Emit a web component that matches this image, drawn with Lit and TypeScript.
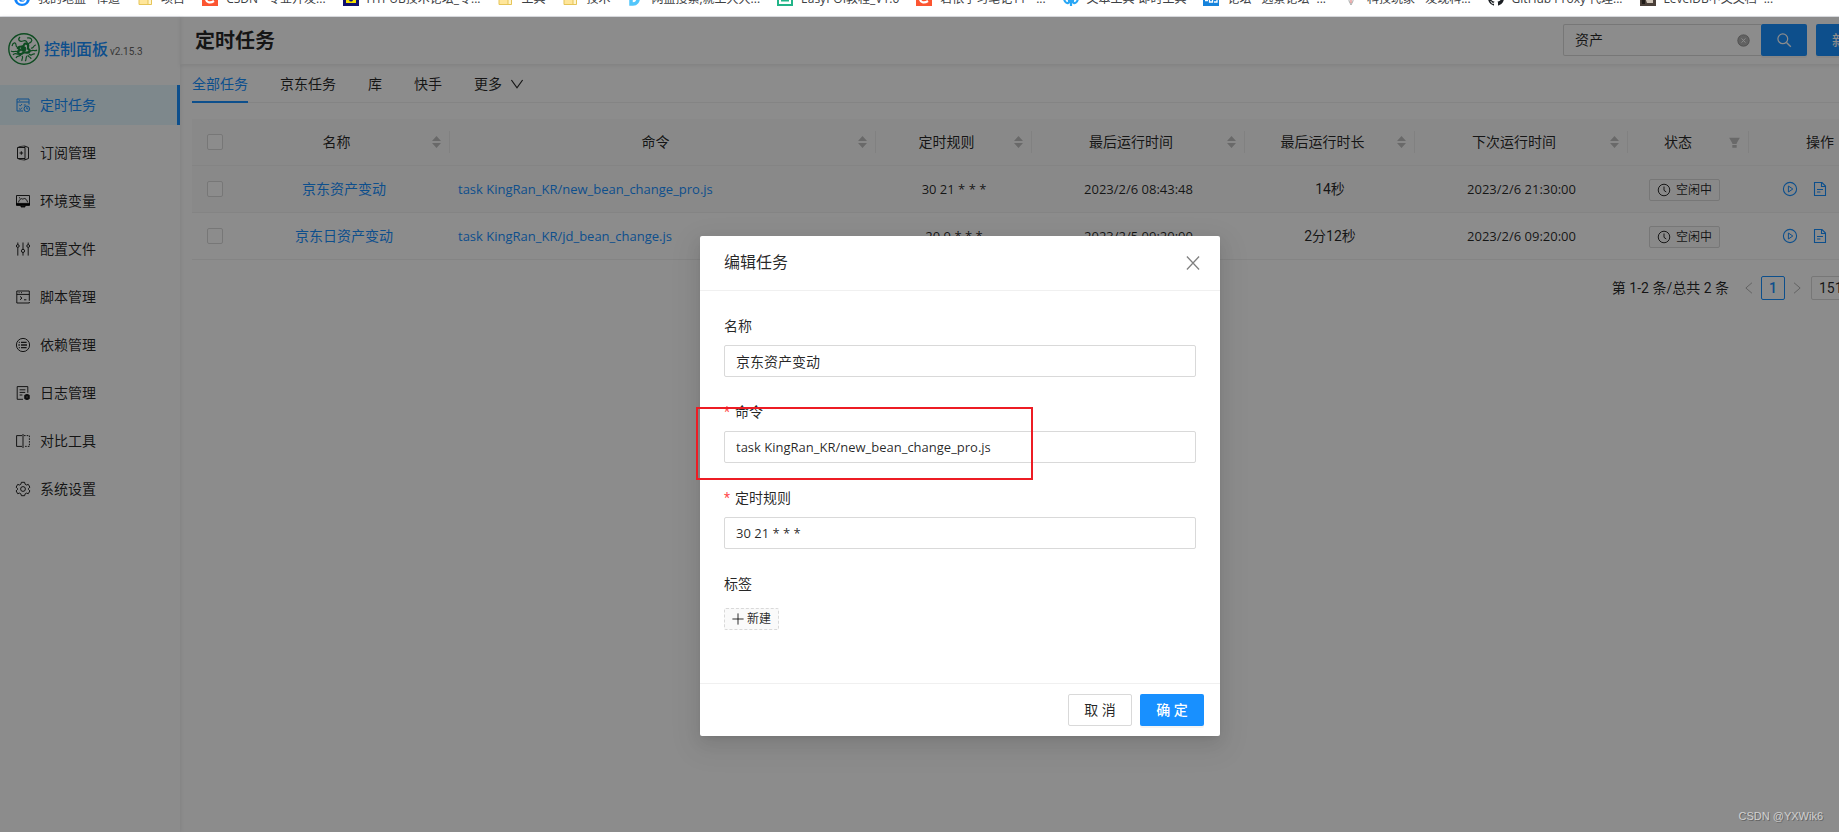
import { LitElement, html, svg, css, nothing, TemplateResult } from "lit";
import { customElement, property, state } from "lit/decorators.js";
import { classMap } from "lit/directives/class-map.js";

type Shape = TemplateResult;

/* Line icons on a 16 x 16 grid, painted in the current text colour. */
const SHAPES: Record<string, Shape> = {
  schedule: svg`<path d="M2 14V2h12v5.5M2 5h12M2 14h6"/><path d="M4.3 3.5h.8M4.2 8l1.1 1 1.7-2M4.2 11.6l1.1 1L7 10.6M8.8 8h2"/><circle cx="11.8" cy="11.8" r="2.8"/><path d="M11.8 10.2v1.7h1.4"/>`,
  book: svg`<path d="M2.500 2.5h7.500v11H2.500zM10 1.2l3.500 1.3v11L10 14.8M4.500 8h3.600M6.3 6.200v3.600"/><path d="M3.500 1.800 9.8.9v1.6M3.500 14.2l6.300.9v-1.6" stroke-width=".8"/>`,
  monitor: svg`<path d="M1.5 2.5h13v9h-13z"/><path d="M3.4 9.4c1.4-3.8 3-4.4 4.5-3.1 1.5-1.6 3.5-.8 4.8 3.1M4 4.8h1"/><path fill="currentColor" d="M1.5 10.4h13v2H10v1.6H6v-1.6H1.500z"/>`,
  sliders: svg`<path d="M2.8 1.5v2M2.8 6.6v8M8 1.5v6.7M8 11.6v3M13.2 1.5v2M13.2 6.6v8"/><circle cx="2.8" cy="5" r="1.4"/><circle cx="8" cy="9.9" r="1.6"/><circle cx="13.2" cy="5" r="1.4"/>`,
  code: svg`<path d="M1.8 2h12.5v9.8M1.8 2v12h12.5v-1M1.8 5.4h12.5M3.6 3.7h1M6 3.7h1M5 7.4l2 1.7-2 1.7M9 10.8h2.4"/>`,
  list: svg`<circle cx="8" cy="8" r="6.6"/><path stroke-width="1.4" d="M6 5.4h5.600M6 8h6M6 10.6h5.600M3.8 5.4h1M3.4 8h1.4M3.8 10.6h1"/>`,
  log: svg`<path d="M8 14.3H2.2V1.6h10.6v6.2M4.6 4.8h5.8M4.6 7.4h5.6M4.6 10h2.8"/><circle cx="12" cy="12" r="2" stroke-width="1.800"/><path d="M12 9v6M9.4 10.500l5.200 3M14.600 10.500l-5.200 3" stroke-width=".7"/>`,
  compare: svg`<path d="M7 2.6H1.6v10.8H7M8 1v14"/><path stroke-dasharray="1.6 1.1" d="M9 2.6h5.4v10.8H9"/>`,
  gear: svg`<path d="M6.4 1.3h3.2l.5 1.9 1.3.8 1.9-.6 1.6 2.8-1.4 1.3v1l1.4 1.4-1.6 2.8-1.9-.6-1.3.8-.5 1.8H6.4l-.5-1.8-1.3-.8-1.9.6-1.6-2.8 1.4-1.4v-1L1.1 6.2l1.6-2.8 1.9.6 1.3-.8z"/><circle cx="8" cy="8" r="2.4"/>`,
  down: svg`<path d="M2.4 4 8 11.8 13.6 4" stroke-width="1.2"/>`,
  left: svg`<path d="M11.4 2 4.4 8l7 6"/>`,
  right: svg`<path d="m4.6 2 7 6-7 6"/>`,
  close: svg`<path d="M2.6 2.200 13.4 13.800M13.4 2.200 2.6 13.800" stroke-width="1.1"/>`,
  plus: svg`<path d="M8 1.6v12.8M1.6 8h12.8" stroke-width="1.1"/>`,
  search: svg`<circle cx="6.8" cy="6.8" r="4.9" stroke-width="1.2"/><path d="m10.5 10.5 4.3 4.3" stroke-width="1.4"/>`,
  clear: svg`<circle cx="8" cy="8" r="7.2" fill="currentColor"/><path d="m5.6 5.4 4.8 5.2M10.4 5.4l-4.8 5.2" stroke="#fff" stroke-width="1.2"/>`,
  clock: svg`<circle cx="8" cy="8" r="6.6" stroke-width="1.1"/><path d="M8 4v4.4l2.6 1.9" stroke-width="1.1"/>`,
  play: svg`<circle cx="8" cy="8" r="6.6" stroke-width="1.1"/><path d="M6.4 5v6l4.4-3z"/>`,
  doc: svg`<path d="M2.500 1.500h7.500l3.500 3.500v9.500h-11zM9.500 1.500V5.500h4M5 8.500h6M5 11h3.4" stroke-width="1.1"/>`,
  more: svg`<path d="M3 8h.1M8 8h.1M13 8h.1" stroke-width="2" stroke-linecap="round"/>`,
  filter: svg`<path fill="currentColor" stroke="none" d="M1.4 2h13.2l-3.9 6.8v.9H5.3v-.9zM5.3 11h5.4v3.4H5.3z"/>`,
};

const icon = (name: string, size = 16) => html`<svg
  width=${size} height=${size} viewBox="0 0 16 16" fill="none"
  stroke="currentColor" stroke-width="1" aria-hidden="true">${SHAPES[name]}</svg>`;

/* Favicons of the bookmark bar, on the same grid. */
const FAVICONS: Record<string, Shape> = {
  zen: svg`<circle cx="8" cy="8" r="8" fill="#1183fb"/><path d="M4 9c0 5 8 5 8 0 0-4-5-3-5-1s3 2 3 1" fill="none" stroke="#fff" stroke-width="1.8"/>`,
  folder: svg`<path d="M0 1h12v13.5H0z" fill="#ffe69a" stroke="#e6c558"/><path d="M9 9v5.500h3.500V9z" fill="#fff4cc" stroke="#e6c558"/>`,
  csdn: svg`<path d="M0 0h16v16H0z" fill="#fc5531"/><path d="M12 5C7 2 4 5 4 8.500c0 4 4 5 8 2.500" fill="none" stroke="#fff" stroke-width="2.200"/>`,
  forum: svg`<path d="M0 0h16v16H0z" fill="#10106e"/><path d="M3 3h10v10H3z" fill="#f5e100"/><circle cx="8" cy="9.500" r="2" fill="#10106e"/>`,
  disk: svg`<path d="M4 2h2c7 0 7 12 0 12H4z" fill="none" stroke="#53c6fb" stroke-width="3.500"/>`,
  poi: svg`<path d="M1 1h14v14H1z" fill="#fff" stroke="#22b488" stroke-width="2"/><path d="M4 6h8M4 10.500h8" stroke="#22b488" stroke-width="2"/>`,
  text: svg`<path d="M1 7c0 7 5 7 5 5V5M15 7c0 7-5 7-5 5V5M8 2v14" fill="none" stroke="#2aa7f5" stroke-width="2.200"/>`,
  itbbs: svg`<path d="M0 0h16v16H0z" fill="#1683dc"/><path d="M2 10.500h3M6.500 8v4h3V8zM11 12h3V9h-3" fill="none" stroke="#fff" stroke-width="1.300"/>`,
  pen: svg`<path d="M6 2v9l2 4 2-4V2z" fill="#fff" stroke="#aaa"/><path d="M8 8v5" stroke="#d66"/>`,
  github: svg`<path fill="#1b1f23" d="M8 0a8 8 0 0 0-2.530 15.590c.4.070.55-.17.55-.38v-1.490c-2.230.48-2.690-.94-2.690-.94-.36-.92-.89-1.170-.89-1.170-.73-.5.050-.49.050-.49.800.060 1.230.83 1.230.83.71 1.220 1.870.87 2.330.66.070-.52.280-.87.500-1.070-1.770-.2-3.640-.89-3.640-3.950 0-.87.310-1.590.82-2.150-.08-.2-.36-1.020.08-2.120 0 0 .67-.22 2.200.82a7.600 7.600 0 0 1 4 0c1.530-1.040 2.200-.82 2.200-.82.44 1.100.16 1.920.08 2.120.51.56.82 1.270.82 2.150 0 3.070-1.870 3.750-3.650 3.950.29.25.54.73.54 1.480v2.190c0 .21.150.46.550.38A8 8 0 0 0 8 0z"/>`,
  level: svg`<path d="M0 0h16v16H0z" fill="#4a4039"/><path d="M4 5h9v8H7z" fill="#cfc4b8"/><path d="M1 2h4v12H2z" fill="#1f1a17"/>`,
};

const BOOKMARKS = [
  ["zen", "我的地盘 - 禅道"],
  ["folder", "项目"],
  ["csdn", "CSDN - 专业开发..."],
  ["forum", "HTPUB技术论坛_专..."],
  ["folder", "工具"],
  ["folder", "技术"],
  ["disk", "网盘搜索,就上大大..."],
  ["poi", "EasyPOI教程_V1.0"],
  ["csdn", "若依学习笔记11 - ..."],
  ["text", "文本工具-即时工具"],
  ["itbbs", "论坛 - 远景论坛 -..."],
  ["pen", "科技玩家 - 发现科..."],
  ["github", "GitHub Proxy 代理..."],
  ["level", "LevelDB中文文档 -..."],
];

const MENU = [
  ["schedule", "定时任务"],
  ["book", "订阅管理"],
  ["monitor", "环境变量"],
  ["sliders", "配置文件"],
  ["code", "脚本管理"],
  ["list", "依赖管理"],
  ["log", "日志管理"],
  ["compare", "对比工具"],
  ["gear", "系统设置"],
];

const TABS = ["全部任务", "京东任务", "库", "快手"];

interface Task {
  name: string;
  command: string;
  rule: string;
  last: string;
  duration: string;
  next: string;
}

const TASKS: Task[] = [
  {
    name: "京东资产变动",
    command: "task KingRan_KR/new_bean_change_pro.js",
    rule: "30 21 * * *",
    last: "2023/2/6 08:43:48",
    duration: "14秒",
    next: "2023/2/6 21:30:00",
  },
  {
    name: "京东日资产变动",
    command: "task KingRan_KR/jd_bean_change.js",
    rule: "20 9 * * *",
    last: "2023/2/5 09:20:00",
    duration: "2分12秒",
    next: "2023/2/6 09:20:00",
  },
];

const base = css`
  * {
    box-sizing: border-box;
  }
  button,
  input,
  select {
    font: inherit;
    color: inherit;
    margin: 0;
    border-radius: 2px;
  }
  button {
    padding: 0;
    border: 0;
    background: none;
    cursor: pointer;
  }
  a {
    color: #1890ff;
    text-decoration: none;
  }
  svg {
    display: block;
    flex: none;
  }
  .latin {
    font-family: "Open Sans", "Noto Sans CJK SC", sans-serif;
    font-size: 13px;
  }
  .primary {
    background: #1890ff;
    color: #fff;
    font-weight: 500;
    box-shadow: 0 2px 0 rgba(0, 0, 0, 0.045);
  }
`;

@customElement("bookmark-bar")
class BookmarkBar extends LitElement {
  static styles = [
    base,
    css`
      :host {
        display: block;
        height: 17px;
        overflow: hidden;
        background: #fff;
        border-bottom: 1px solid #dadce0;
        color: #3c4043;
        font: 12px/18px "Open Sans", "Noto Sans CJK SC", sans-serif;
      }
      .items {
        display: flex;
        gap: 17px;
        margin-top: -10px;
        padding-left: 14px;
      }
      a {
        display: flex;
        gap: 8px;
        color: inherit;
        white-space: nowrap;
      }
    `,
  ];

  render() {
    return html`<nav class="items">
      ${BOOKMARKS.map(
        ([mark, label]) => html`<a href="#">
          <svg width="16" height="16" viewBox=${mark === "folder" ? "-2 0 16 16" : "0 0 16 16"} aria-hidden="true">${FAVICONS[mark]}</svg>
          <span>${label}</span>
        </a>`
      )}
    </nav>`;
  }
}

@customElement("side-menu")
class SideMenu extends LitElement {
  @state() private current = "定时任务";

  static styles = [
    base,
    css`
      :host {
        display: block;
        flex: 0 0 180px;
        background: #fff;
        box-shadow: 1px 0 4px rgba(0, 21, 41, 0.08);
      }
      .brand {
        display: flex;
        align-items: center;
        height: 64px;
        padding-left: 8px;
        color: #1890ff;
      }
      .name {
        margin: 0 2px 0 4px;
        padding-top: 2px;
        font-size: 16px;
        font-weight: 500;
      }
      .version {
        padding-top: 6px;
        font-size: 10px;
        color: #666;
      }
      .menu {
        display: flex;
        flex-direction: column;
        gap: 8px;
        padding-top: 4px;
      }
      .item {
        display: flex;
        align-items: center;
        gap: 9px;
        height: 40px;
        padding-left: 15px;
        color: rgba(0, 0, 0, 0.85);
      }
      .item.active {
        color: #1890ff;
        background: #e6f7ff;
        border-right: 3px solid #1890ff;
      }
    `,
  ];

  render() {
    return html`
      <div class="brand">
        <svg width="32" height="32" viewBox="0 0 32 32" fill="none" stroke="#1b8a3e" aria-hidden="true">
          <circle cx="16" cy="16" r="15.200" stroke-width="1.400" />
          <path stroke-width="1.200" d="M12 4c-3 3 0 5 3 4s5 1 4 4M19 5c4-1 6 2 4 4s-4 1-3 4M4 13c1-4 4-4 4-1s3 3 4 1M3 18c3 2 4-1 7 1M5 22c2-3 4 0 7-1M8 25c1-3 3-1 5-3M28 12c-3 0-2 4-5 3M29 17c-2 2-4-1-6 1M27 21c-3-1-3 3-6 0M23 26c0-3-3-1-3-4M14 28c-1-2 2-3 0-5M17 28c2-1 0-3 2-5" />
          <path stroke-width="2.200" d="M10 15c2-3 5 0 6-3s5-1 4 2 4 3 1 5-4-1-6 1-5 1-5-1 2-1 2-2z" />
          <circle cx="15.500" cy="16" r="2.400" fill="#1b8a3e" />
        </svg>
        <span class="name">控制面板</span>
        <span class="version">v2.15.3</span>
      </div>
      <nav class="menu">
        ${MENU.map(
          ([glyph, label]) => html`<a
            href="#"
            class=${classMap({ item: true, active: label === this.current })}
            @click=${() => (this.current = label)}
            >${icon(glyph)}<span>${label}</span></a
          >`
        )}
      </nav>
    `;
  }
}

@customElement("task-table")
class TaskTable extends LitElement {
  static styles = [
    base,
    css`
      :host {
        display: block;
      }
      table {
        width: 100%;
        table-layout: fixed;
        border-collapse: separate;
        border-spacing: 0;
      }
      .c-check { width: 46px; }
      .c-name { width: 212px; }
      .c-rule { width: 156px; }
      .c-time { width: 213px; }
      .c-span { width: 170px; }
      .c-state { width: 121px; }
      .c-act { width: 142px; }
      th,
      td {
        height: 47px;
        padding: 0 8px;
        border-bottom: 1px solid #f0f0f0;
        font-weight: 400;
        text-align: center;
        white-space: nowrap;
      }
      th {
        background: #fafafa;
      }
      th.split {
        background: linear-gradient(#ebebeb, #ebebeb) no-repeat right center / 1px 22px #fafafa;
      }
      .hover td {
        background: #fafafa;
      }
      td.command {
        text-align: left;
      }
      .head {
        display: flex;
        align-items: center;
      }
      .label {
        flex: 1;
      }
      .sorter,
      .filter {
        color: #bfbfbf;
        margin-left: 4px;
      }
      .filter {
        padding: 0 4px;
        margin-right: -4px;
      }
      input {
        display: block;
        appearance: none;
        width: 16px;
        height: 16px;
        margin: 0 auto;
        border: 1px solid #d9d9d9;
        background: #fff;
      }
      .tag {
        display: inline-flex;
        align-items: center;
        vertical-align: middle;
        gap: 5px;
        height: 22px;
        margin-right: 8px;
        padding: 0 7px;
        border: 1px solid #d9d9d9;
        border-radius: 2px;
        background: #fafafa;
        font-size: 12px;
      }
      .actions {
        display: flex;
        justify-content: center;
        gap: 14px;
        color: #1890ff;
      }
      .pager {
        display: flex;
        align-items: center;
        justify-content: flex-end;
        margin-top: 16px;
      }
      .step {
        display: flex;
        justify-content: center;
        width: 24px;
        color: rgba(0, 0, 0, 0.35);
      }
      .total {
        margin-right: 8px;
      }
      .page {
        width: 24px;
        height: 24px;
        line-height: 22px;
        border: 1px solid #1890ff;
        color: #1890ff;
        font-weight: 500;
      }
      select {
        appearance: none;
        width: 80px;
        height: 24px;
        margin-left: 2px;
        padding: 0 7px;
        border: 1px solid #d9d9d9;
        background: #fff;
      }
    `,
  ];

  private sortable(label: string) {
    return html`<th class="split" scope="col">
      <div class="head">
        <span class="label">${label}</span>
        <button class="sorter" aria-label="${label}排序">
          <svg width="11" height="14" viewBox="0 0 11 14" fill="currentColor" aria-hidden="true">
            <path d="M5.500 1L10 6H1zM5.500 13L1 8h9z" />
          </svg>
        </button>
      </div>
    </th>`;
  }

  render() {
    return html`
      <table>
        <colgroup>
          <col class="c-check" /><col class="c-name" /><col /><col class="c-rule" /><col class="c-time" />
          <col class="c-span" /><col class="c-time" /><col class="c-state" /><col class="c-act" />
        </colgroup>
        <thead>
          <tr>
            <th><input type="checkbox" aria-label="全选" /></th>
            ${["名称", "命令", "定时规则", "最后运行时间", "最后运行时长", "下次运行时间"].map((l) => this.sortable(l))}
            <th class="split" scope="col">
              <div class="head">
                <span class="label">状态</span>
                <button class="filter" aria-label="筛选状态">${icon("filter", 13)}</button>
              </div>
            </th>
            <th scope="col">操作</th>
          </tr>
        </thead>
        <tbody>
          ${TASKS.map(
            (t, i) => html`<tr class=${i === 0 ? "hover" : ""}>
              <td><input type="checkbox" aria-label=${t.name} /></td>
              <td><a href="#">${t.name}</a></td>
              <td class="command latin"><a href="#">${t.command}</a></td>
              <td class="latin">${t.rule}</td>
              <td class="latin">${t.last}</td>
              <td>${t.duration}</td>
              <td class="latin">${t.next}</td>
              <td><span class="tag">${icon("clock", 14)}空闲中</span></td>
              <td>
                <div class="actions">
                  <button aria-label="运行">${icon("play")}</button>
                  <button aria-label="日志">${icon("doc")}</button>
                  <button aria-label="更多">${icon("more")}</button>
                </div>
              </td>
            </tr>`
          )}
        </tbody>
      </table>
      <div class="pager">
        <span class="total">第 1-2 条/总共 2 条</span>
        <button class="step" aria-label="上一页">${icon("left", 14)}</button>
        <button class="page">1</button>
        <button class="step" aria-label="下一页">${icon("right", 14)}</button>
        <select aria-label="每页条数"><option>151 条/页</option></select>
      </div>
    `;
  }
}

@customElement("edit-dialog")
class EditDialog extends LitElement {
  @property({ attribute: false }) task!: Task;

  static styles = [
    base,
    css`
      :host {
        display: block;
        width: 520px;
        background: #fff;
        border-radius: 2px;
        box-shadow: 0 3px 6px -4px rgba(0, 0, 0, 0.12), 0 6px 16px rgba(0, 0, 0, 0.08),
          0 9px 28px 8px rgba(0, 0, 0, 0.05);
      }
      header {
        display: flex;
        align-items: center;
        justify-content: space-between;
        height: 55px;
        padding: 0 18px 0 24px;
        border-bottom: 1px solid #f0f0f0;
      }
      h2 {
        margin: 0;
        font-size: 16px;
        font-weight: 400;
        line-height: 22px;
      }
      .close {
        color: rgba(0, 0, 0, 0.5);
      }
      .body {
        display: grid;
        gap: 24px;
        padding: 24px 24px 48px;
      }
      .field {
        display: grid;
        gap: 8px;
      }
      .required::before {
        content: "*";
        margin-right: 5px;
        color: #ff4d4f;
      }
      .field input {
        width: 100%;
        height: 32px;
        padding: 0 11px;
        border: 1px solid #d9d9d9;
        background: #fff;
      }
      .control {
        display: flex;
        align-items: center;
        height: 32px;
      }
      .add {
        display: flex;
        align-items: center;
        gap: 2px;
        height: 22px;
        padding: 0 7px 0 6px;
        border: 1px dashed #d9d9d9;
        background: #fafafa;
        font-size: 12px;
      }
      footer {
        display: flex;
        justify-content: flex-end;
        gap: 8px;
        padding: 10px 16px;
        border-top: 1px solid #f0f0f0;
      }
      footer button {
        width: 64px;
        height: 32px;
      }
      .default {
        border: 1px solid #d9d9d9;
        background: #fff;
      }
      .mark {
        position: absolute;
        left: -4px;
        top: 171px;
        width: 337px;
        height: 73px;
        border: 2px solid #ed1c24;
        pointer-events: none;
      }
    `,
  ];

  private field(id: string, label: string, value: string, required: boolean) {
    return html`<div class="field">
      <label for=${id} class=${required ? "required" : nothing}>${label}</label>
      <input id=${id} class=${required ? "latin" : nothing} type="text" .value=${value} />
    </div>`;
  }

  render() {
    const t = this.task;
    return html`
      <header>
        <h2>编辑任务</h2>
        <button class="close" aria-label="关闭">${icon("close", 18)}</button>
      </header>
      <div class="body">
        ${this.field("name", "名称", t.name, false)}
        ${this.field("command", "命令", t.command, true)}
        ${this.field("rule", "定时规则", t.rule, true)}
        <div class="field">
          <span>标签</span>
          <div class="control"><button class="add">${icon("plus", 14)}新建</button></div>
        </div>
      </div>
      <footer>
        <button class="default">取 消</button>
        <button class="primary">确 定</button>
      </footer>
      <div class="mark"></div>
    `;
  }
}

@customElement("app-root")
class AppRoot extends LitElement {
  @state() private tab = TABS[0];

  static styles = [
    base,
    css`
      :host {
        display: flex;
        flex-direction: column;
        height: 100vh;
        position: relative;
        overflow: hidden;
        background: #fff;
        color: rgba(0, 0, 0, 0.85);
        font: 14px/22px Roboto, "Noto Sans CJK SC", sans-serif;
      }
      bookmark-bar {
        flex: none;
      }
      .stage {
        position: relative;
        display: flex;
        flex: 1;
        min-width: 1920px;
      }
      .page {
        flex: 1;
        min-width: 0;
      }
      .top {
        display: flex;
        align-items: flex-start;
        height: 48px;
        padding: 7px 16px 0 15px;
        border-bottom: 1px solid #f0f0f0;
        box-shadow: 0 1px 4px rgba(0, 21, 41, 0.08);
      }
      h1 {
        flex: 1;
        margin: 0;
        font-size: 20px;
        line-height: 34px;
        font-weight: 700;
      }
      .search {
        display: flex;
        margin-right: 9px;
      }
      .box {
        display: flex;
        align-items: center;
        width: 198px;
        height: 32px;
        padding: 0 11px;
        border: 1px solid #d9d9d9;
        border-right: 0;
        border-radius: 2px 0 0 2px;
        background: #fff;
      }
      .box input {
        flex: 1;
        min-width: 0;
        padding: 0;
        border: 0;
        background: none;
      }
      .clear {
        color: rgba(0, 0, 0, 0.3);
      }
      .go {
        display: flex;
        align-items: center;
        justify-content: center;
        width: 46px;
        height: 32px;
      }
      .create {
        width: 88px;
        height: 32px;
      }
      .content {
        padding: 0 29px 0 12px;
      }
      .tabs {
        display: flex;
        gap: 32px;
        margin-bottom: 16px;
        box-shadow: inset 0 -1px #f0f0f0;
      }
      .tab {
        display: flex;
        align-items: center;
        gap: 7px;
        height: 38px;
        border-radius: 0;
      }
      .tab.active {
        color: #1890ff;
        box-shadow: inset 0 -2px #1890ff;
      }
      .mask {
        position: absolute;
        inset: 0;
        display: flex;
        justify-content: center;
        align-items: flex-start;
        padding-top: 219px;
        background: rgba(0, 0, 0, 0.45);
      }
      edit-dialog {
        position: relative;
      }
      .credit {
        position: absolute;
        right: 16px;
        bottom: 8px;
        font: 11px/16px "Liberation Sans", sans-serif;
        color: #d0d0d0;
        text-shadow: 1px 1px 0 #666;
      }
    `,
  ];

  render() {
    return html`
      <bookmark-bar></bookmark-bar>
      <div class="stage">
        <side-menu></side-menu>
        <main class="page">
          <div class="top">
            <h1>定时任务</h1>
            <div class="search">
              <div class="box">
                <input type="text" aria-label="搜索" value="资产" />
                <button class="clear" aria-label="清除">${icon("clear", 13)}</button>
              </div>
              <button class="primary go" aria-label="搜索">${icon("search")}</button>
            </div>
            <button class="primary create">新建任务</button>
          </div>
          <div class="content">
            <div class="tabs" role="tablist">
              ${TABS.map(
                (t) => html`<button
                  role="tab"
                  class=${classMap({ tab: true, active: t === this.tab })}
                  @click=${() => (this.tab = t)}
                >${t}</button>`
              )}
              <button class="tab">更多 ${icon("down")}</button>
            </div>
            <task-table></task-table>
          </div>
        </main>
        <div class="mask"><edit-dialog .task=${TASKS[0]}></edit-dialog></div>
      </div>
      <span class="credit">CSDN @YXWik6</span>
    `;
  }
}
